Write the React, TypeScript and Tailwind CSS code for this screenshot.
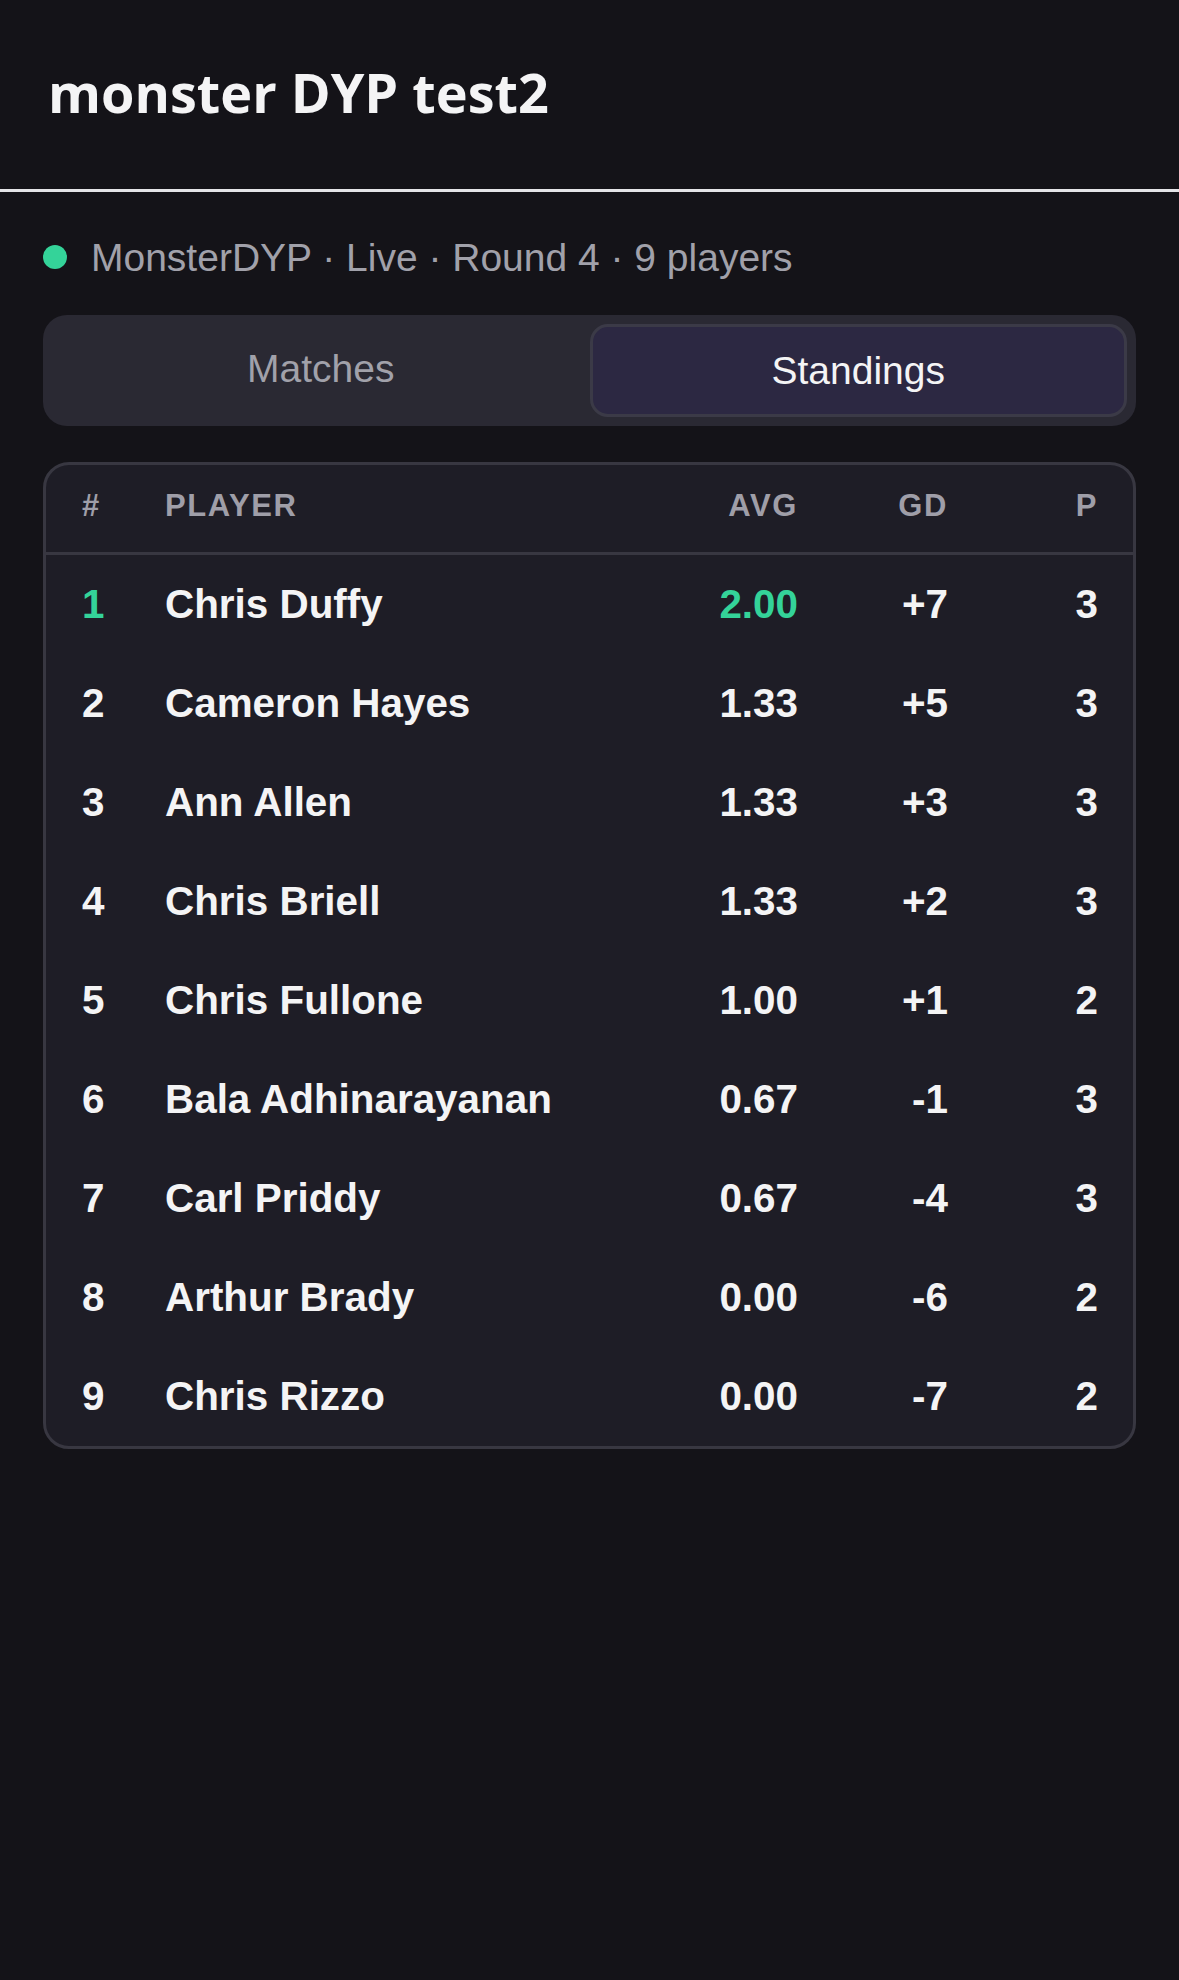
import React from "react";

type Row = { rank: number; name: string; avg: string; gd: string; p: number };

const rows: Row[] = [
  { rank: 1, name: "Chris Duffy", avg: "2.00", gd: "+7", p: 3 },
  { rank: 2, name: "Cameron Hayes", avg: "1.33", gd: "+5", p: 3 },
  { rank: 3, name: "Ann Allen", avg: "1.33", gd: "+3", p: 3 },
  { rank: 4, name: "Chris Briell", avg: "1.33", gd: "+2", p: 3 },
  { rank: 5, name: "Chris Fullone", avg: "1.00", gd: "+1", p: 2 },
  { rank: 6, name: "Bala Adhinarayanan", avg: "0.67", gd: "-1", p: 3 },
  { rank: 7, name: "Carl Priddy", avg: "0.67", gd: "-4", p: 3 },
  { rank: 8, name: "Arthur Brady", avg: "0.00", gd: "-6", p: 2 },
  { rank: 9, name: "Chris Rizzo", avg: "0.00", gd: "-7", p: 2 },
];

export default function App() {
  return (
    <div
      className="min-h-[1980px] w-full bg-[#141318] text-[#f4f4f5]"
      style={{ fontFamily: '"Liberation Sans", Arial, sans-serif' }}
    >
      <header className="flex h-[192px] items-center border-b-[3px] border-[#e4e4e7] px-[48px] pb-[6px]">
        <h1
          className="text-[54px] font-bold leading-none text-[#f4f4f5]"
          style={{ fontFamily: '"Open Sans", "Noto Sans", sans-serif' }}
        >
          monster DYP test2
        </h1>
      </header>

      <main className="px-[43px] pt-[44px]">
        <div className="flex h-[42px] items-center gap-[24px]">
          <span className="h-[24px] w-[24px] shrink-0 rounded-full bg-[#34d399]" />
          <span className="text-[39px] leading-none text-[#a1a1aa]">
            MonsterDYP · Live · Round 4 · 9 players
          </span>
        </div>

        <div className="mt-[37px] grid h-[111px] grid-cols-2 rounded-[24px] bg-[#2a2933] p-[9px]">
          <button className="flex items-center justify-center rounded-[18px] border-[3px] border-transparent pb-[4px] text-[39px] leading-none text-[#a1a1aa]">
            Matches
          </button>
          <button className="flex items-center justify-center rounded-[18px] border-[3px] border-[#3b3a47] bg-[#2c2842] text-[39px] leading-none text-[#f4f4f5]">
            Standings
          </button>
        </div>

        <div className="mt-[36px] overflow-hidden rounded-[26px] border-[3px] border-[#383741] bg-[#1e1d26]">
          <div className="grid h-[90px] grid-cols-[83px_1fr_150px_150px_150px] items-center border-b-[3px] border-[#383741] pb-[4px] pl-[36px] pr-[35px] text-[31px] font-bold tracking-[1.6px] text-[#9f9ea8]">
            <span>#</span>
            <span>PLAYER</span>
            <span className="text-right">AVG</span>
            <span className="text-right">GD</span>
            <span className="text-right">P</span>
          </div>
          {rows.map((r) => {
            const top = r.rank === 1;
            return (
              <div
                key={r.rank}
                className="grid h-[99px] grid-cols-[83px_1fr_150px_150px_150px] items-center pl-[36px] pr-[35px] text-[40.4px] font-bold text-[#f4f4f5]"
              >
                <span className={top ? "text-[#34d399]" : ""}>{r.rank}</span>
                <span>{r.name}</span>
                <span className={"text-right " + (top ? "text-[#34d399]" : "")}>{r.avg}</span>
                <span className="text-right">{r.gd}</span>
                <span className="text-right">{r.p}</span>
              </div>
            );
          })}
        </div>
      </main>
    </div>
  );
}
